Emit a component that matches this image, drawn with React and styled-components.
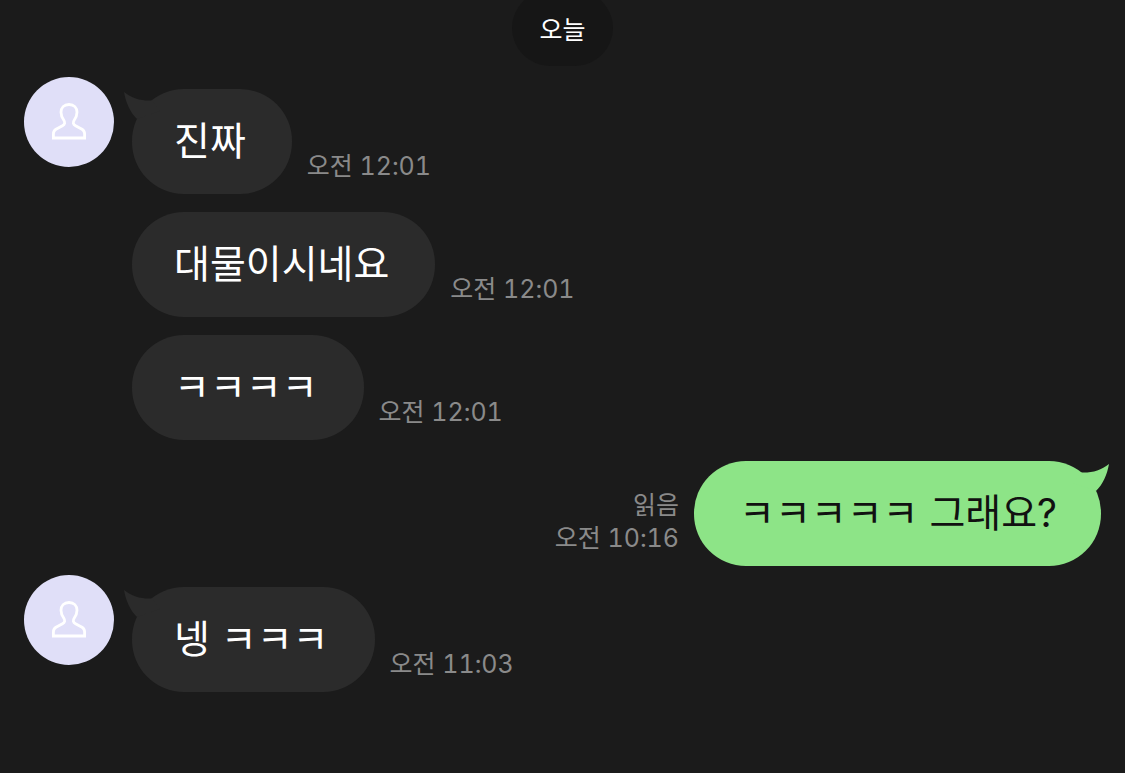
import React from 'react';
import styled, { createGlobalStyle } from 'styled-components';

const GlobalStyle = createGlobalStyle`
  * {
    box-sizing: border-box;
  }

  body {
    margin: 0;
    background-color: #1b1b1b;
    font-family: Inter, "Noto Sans CJK KR", sans-serif;
  }
`;

const messages = [
  { id: 1, text: '진짜', time: '오전 12:01', first: true },
  { id: 2, text: '대물이시네요', time: '오전 12:01' },
  { id: 3, text: 'ㅋㅋㅋㅋ', time: '오전 12:01' },
  { id: 4, text: 'ㅋㅋㅋㅋㅋ 그래요?', time: '오전 10:16', first: true, mine: true, read: true },
  { id: 5, text: '넹 ㅋㅋㅋ', time: '오전 11:03', first: true },
];

const PersonIcon = () => (
  <svg width="36" height="38" viewBox="0 0 36 38" fill="none" stroke="#fff" strokeWidth="2.8" aria-hidden="true">
    <path d="M18 1.500C13 1.500 10 4.600 10 9.300c0 3 1 5.300 2.700 7.700 1.600 2.300 1.300 4.300-1.200 5.700L5 26.300C3 27.500 2.400 28.800 2.400 31V35h31.200v-4c0-2.200-.6-3.500-2.600-4.700l-6.500-3.600c-2.500-1.400-2.800-3.400-1.200-5.700C25 14.600 26 12.300 26 9.300C26 4.600 23 1.500 18 1.500z" />
  </svg>
);

const BubbleTail = ({ mine }) => (
  <Tail $mine={mine} width="36" height="32" viewBox="0 0 36 32" aria-hidden="true">
    <path d="M0 1C8 7.500 17 10 28 9.500L36 20L13 28C6 21 2 12 0 1z" />
  </Tail>
);

const Message = ({ message }) => {
  const { text, time, first, mine, read } = message;

  return (
    <Row $mine={mine} $first={first}>
      {!mine && <AvatarSlot>{first && <Avatar><PersonIcon /></Avatar>}</AvatarSlot>}
      <Bubble $mine={mine}>
        {first && <BubbleTail mine={mine} />}
        <BubbleText>{text}</BubbleText>
      </Bubble>
      <Meta $mine={mine}>
        {read && <span>읽음</span>}
        <time>{time}</time>
      </Meta>
    </Row>
  );
};

const App = () => (
  <>
    <GlobalStyle />
    <Chat>
      <DateLabel>오늘</DateLabel>
      <MessageList>
        {messages.map((message) => (
          <Message key={message.id} message={message} />
        ))}
      </MessageList>
    </Chat>
  </>
);

const Chat = styled.main`
  min-height: 100vh;
  display: flex;
  flex-direction: column;
  align-items: center;
`;

const DateLabel = styled.div`
  margin-top: -10px;
  padding: 22px 27px 18px;
  border-radius: 38px;
  background-color: #161616;
  color: #fff;
  font-size: 25px;
  line-height: 36px;
`;

const MessageList = styled.ol`
  align-self: stretch;
  margin: 0;
  padding: 2px 24px 0;
  list-style: none;
`;

const Row = styled.li`
  display: flex;
  flex-direction: ${({ $mine }) => ($mine ? 'row-reverse' : 'row')};
  align-items: flex-end;
  margin-top: ${({ $first }) => ($first ? '21px' : '18px')};
`;

const AvatarSlot = styled.div`
  width: 108px;
  height: 117px;
  margin-top: -12px;
  flex-shrink: 0;
`;

const Avatar = styled.div`
  width: 90px;
  height: 90px;
  border-radius: 50%;
  background-color: #e0dff8;
  display: flex;
  align-items: center;
  justify-content: center;
`;

const Bubble = styled.div`
  position: relative;
  padding: ${({ $mine }) => ($mine ? '27px 44px 28px 45px' : '27px 46px 28px 42px')};
  border-radius: 52px;
  background-color: ${({ $mine }) => ($mine ? '#8de487' : '#2b2b2b')};
  color: ${({ $mine }) => ($mine ? '#111' : '#fff')};
`;

const Tail = styled.svg`
  position: absolute;
  top: 2px;
  ${({ $mine }) => ($mine ? 'right: -8px; transform: scaleX(-1);' : 'left: -8px;')}
  fill: ${({ $mine }) => ($mine ? '#8de487' : '#2b2b2b')};
`;

const BubbleText = styled.p`
  position: relative;
  margin: 0;
  font-size: 39px;
  line-height: 50px;
`;

const Meta = styled.div`
  display: flex;
  flex-direction: column;
  align-items: ${({ $mine }) => ($mine ? 'flex-end' : 'flex-start')};
  padding: 0 15px 11px;
  color: #8a8a8a;
  font-size: 25px;
  font-variant-numeric: tabular-nums;
  line-height: 33px;
`;

export default App;
